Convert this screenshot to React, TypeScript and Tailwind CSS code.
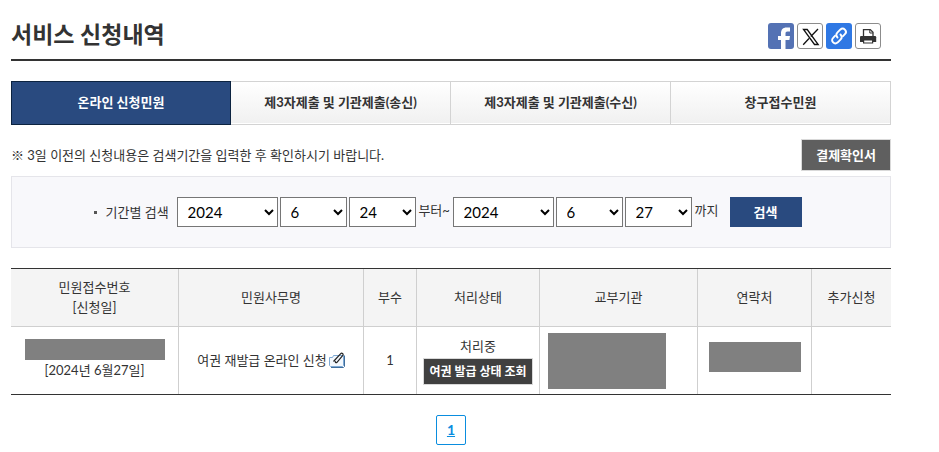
import React from "react";

const tabs = ["온라인 신청민원", "제3자제출 및 기관제출(송신)", "제3자제출 및 기관제출(수신)", "창구접수민원"];

const years = ["2022", "2023", "2024"];
const months = Array.from({ length: 12 }, (_, i) => String(i + 1));
const days = Array.from({ length: 31 }, (_, i) => String(i + 1));

function DateSelect({ label, value, options, wide }: { label: string; value: string; options: string[]; wide?: boolean }) {
  return (
    <select
      aria-label={label}
      defaultValue={value}
      className={`h-[30px] border border-[#767676] bg-white pl-1.5 text-[15px] leading-5 text-black ${wide ? "w-[101px]" : "w-[67px]"}`}
    >
      {options.map((o) => (
        <option key={o}>{o}</option>
      ))}
    </select>
  );
}

function ShareButtons() {
  return (
    <div className="flex gap-[3px]">
      <button type="button" aria-label="페이스북" className="size-[26px] overflow-hidden rounded-[3px] bg-[#5472b4]">
        <svg viewBox="0 0 26 26" className="size-full">
          <path fill="#fff" d="M13 26v-9h-3v-4h3v-2.500C13 6.500 15 4.500 18.500 4.500H22v4h-2.500c-1.500 0-2 .7-2 2V13H22l-.6 4h-3.900v9z" />
        </svg>
      </button>
      <button type="button" aria-label="X" className="size-[26px] rounded-[3px] border border-[#8c8c8c] bg-white">
        <svg viewBox="0 0 24 24" className="size-full">
          <path fill="none" stroke="#111" strokeWidth="1.300" d="M5.500 5.500h3.700l11 15h-3.700zM20 5l-7.200 7.500M11 14.500l-5.800 6.300" />
        </svg>
      </button>
      <button type="button" aria-label="링크 복사" className="size-[26px] rounded-[3px] bg-[#2f78e4]">
        <svg viewBox="0 0 26 26" className="size-full" fill="none" stroke="#fff" strokeWidth="1.900" strokeLinecap="round" strokeLinejoin="round">
          <path d="M11.500 14.500c-1.600-1.600-1.600-3.500-.2-4.900l2.900-2.900c1.500-1.400 3.400-1.400 4.700-.1s1.400 3.200 0 4.600l-1.900 2" />
          <path d="M14.500 11.500c1.600 1.600 1.600 3.500.2 4.900l-2.900 2.900c-1.500 1.400-3.400 1.400-4.700.1s-1.400-3.200 0-4.600l1.900-2" />
        </svg>
      </button>
      <button type="button" aria-label="인쇄" className="size-[26px] rounded-[3px] border border-[#8c8c8c] bg-white">
        <svg viewBox="0 0 24 24" className="size-full">
          <path fill="#fff" stroke="#333" strokeWidth="1.300" d="M7.500 12V5.600h6.800l2.700 2.700V12" />
          <path fill="none" stroke="#333" d="M13.800 6v3h3" />
          <path fill="#333" d="M5 12h14q1.200 0 1.200 1.200V18H4v-4.800q0-1.200 1-1.200z" />
          <path fill="#fff" stroke="#333" strokeWidth="1.200" d="M7.600 16h9v3h-9z" />
        </svg>
      </button>
    </div>
  );
}

function AttachmentIcon() {
  return (
    <svg viewBox="0 0 16 16" className="ml-0.5 size-4 shrink-0" fill="none">
      <path d="M.5 5.500h3l1-2h10v10l-1 1h-12l-1-1z" fill="#f3f8fd" stroke="#7ea9d4" />
      <path d="M2 15.500h12.500l1-1V3.500" stroke="#3f6d9c" />
      <path d="M4.500 9.500l7-7.700c1.300-1.300 3.400 0 2.300 1.600L8 10.300c-1 .9-2.200 0-1.500-1.200" stroke="#222" strokeWidth="1.200" />
    </svg>
  );
}

export default function App() {
  const head = "border-r border-b border-[#cfcfcf] px-1 pb-0.5 font-normal last:border-r-0";
  const cell = "border-r border-[#cfcfcf] px-1 last:border-r-0";
  return (
    <main className="bg-white pr-12 pl-[11px] font-[Lato,'Noto_Sans_CJK_KR',sans-serif] text-[13px] leading-5 text-[#333]">
      <header className="flex h-[61px] items-center justify-between border-b-2 border-[#333]">
        <h1 className="pt-2 text-[23px] leading-8 font-bold">서비스 신청내역</h1>
        <div className="pt-3 pr-2.5">
          <ShareButtons />
        </div>
      </header>

      <nav className="mt-5 flex h-11">
        {tabs.map((tab, i) => (
          <a
            key={tab}
            href="#"
            aria-current={i === 0 ? "page" : undefined}
            className={`flex w-1/4 items-center justify-center border pb-0.5 font-bold ${
              i === 0
                ? "border-[#0c2340] bg-[#294a7f] text-white"
                : "border-l-0 border-[#d3d3d3] bg-linear-to-b from-white to-[#f0f0f0] shadow-[inset_0_-1px_0_white]"
            }`}
          >
            {tab}
          </a>
        ))}
      </nav>

      <div className="mt-3.5 flex items-center justify-between">
        <p>※ 3일 이전의 신청내용은 검색기간을 입력한 후 확인하시기 바랍니다.</p>
        <button type="button" className="h-8 border border-[#d9d9d9] bg-[#5f5f5f] px-3.5 font-bold text-white">
          결제확인서
        </button>
      </div>

      <form className="mt-[5px] flex h-[72px] items-center justify-center border border-[#e5e5ea] bg-[#f8f8fb] pr-1.5" onSubmit={(e) => e.preventDefault()}>
        <span className="mr-2 size-[3px] bg-[#555]" />
        <span className="mr-2">기간별 검색</span>
        <div className="flex gap-0.5">
          <DateSelect label="시작 연도" value="2024" options={years} wide />
          <DateSelect label="시작 월" value="6" options={months} />
          <DateSelect label="시작 일" value="24" options={days} />
        </div>
        <span className="w-[37px] pb-1 text-center whitespace-nowrap">부터~</span>
        <div className="flex gap-0.5">
          <DateSelect label="종료 연도" value="2024" options={years} wide />
          <DateSelect label="종료 월" value="6" options={months} />
          <DateSelect label="종료 일" value="27" options={days} />
        </div>
        <span className="ml-[3px] pb-1">까지</span>
        <button type="submit" className="ml-[11px] h-[30px] w-[72px] bg-[#294a7f] font-bold text-white">
          검색
        </button>
      </form>

      <table className="mt-5 w-full table-fixed border-separate border-spacing-0 border-y border-[#333] text-center">
        <colgroup>
          <col className="w-[168px]" />
          <col className="w-[185px]" />
          <col className="w-[53px]" />
          <col className="w-[123px]" />
          <col className="w-[158px]" />
          <col className="w-[114px]" />
          <col className="w-[79px]" />
        </colgroup>
        <thead className="bg-[#f4f4f4]">
          <tr className="h-[58px]">
            <th scope="col" className={head}>민원접수번호<br />[신청일]</th>
            <th scope="col" className={head}>민원사무명</th>
            <th scope="col" className={head}>부수</th>
            <th scope="col" className={head}>처리상태</th>
            <th scope="col" className={head}>교부기관</th>
            <th scope="col" className={head}>연락처</th>
            <th scope="col" className={head}>추가신청</th>
          </tr>
        </thead>
        <tbody>
          <tr className="h-[67px]">
            <td className={`${cell} pb-0.5`}>
              <div className="mx-auto h-[21px] w-[140px] bg-[#808080]" />
              [2024년 6월27일]
            </td>
            <td className={`${cell} pb-0.5`}>
              <a href="#" className="flex items-center justify-center whitespace-nowrap">
                여권 재발급 온라인 신청
                <AttachmentIcon />
              </a>
            </td>
            <td className={`${cell} pb-0.5`}>1</td>
            <td className={cell}>
              <div>처리중</div>
              <button type="button" className="mt-0.5 h-[27px] w-[110px] border border-[#d9d9d9] bg-[#404040] text-[12px] font-bold whitespace-nowrap text-white">
                여권 발급 상태 조회
              </button>
            </td>
            <td className={cell}>
              <div className="ml-1 h-14 w-[118px] bg-[#808080]" />
            </td>
            <td className={cell}>
              <div className="mx-auto mb-2 h-[30px] w-[92px] bg-[#808080]" />
            </td>
            <td className={cell} />
          </tr>
        </tbody>
      </table>

      <nav aria-label="페이지" className="mt-5 flex justify-center">
        <a href="#" aria-current="page" className="flex size-[30px] items-center justify-center rounded-[2px] border border-[#0a8ddf] text-sm font-bold text-[#0a8ddf] underline">
          1
        </a>
      </nav>
    </main>
  );
}
